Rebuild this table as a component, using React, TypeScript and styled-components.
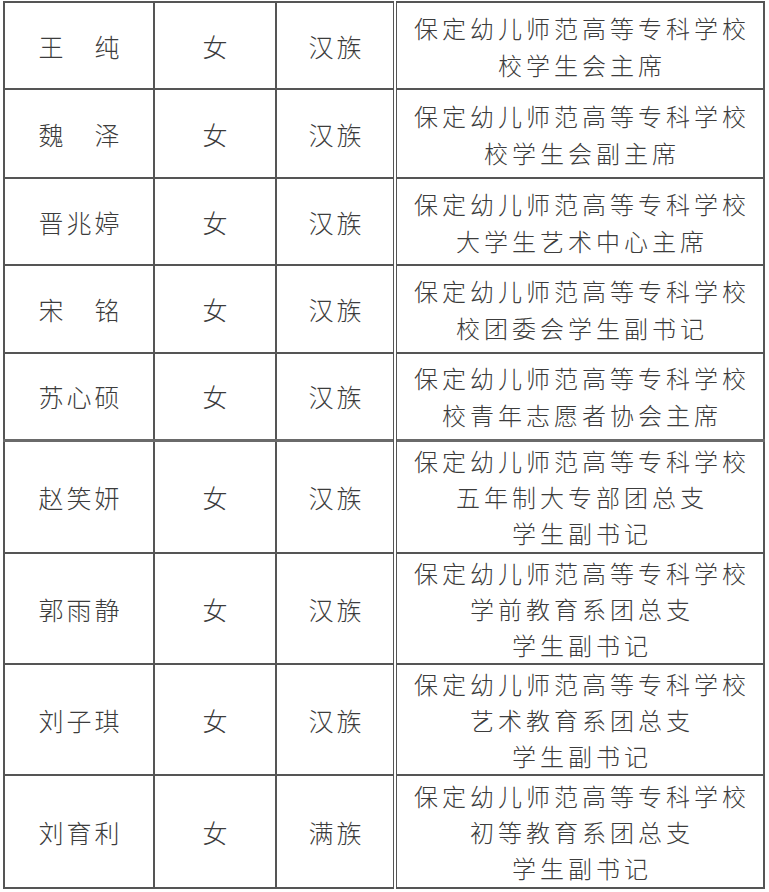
import styled, { createGlobalStyle } from "styled-components";

interface Member {
  name: string;
  gender: string;
  nation: string;
  posts: string[];
  height: number;
}

const members: Member[] = [
  { name: "王纯", gender: "女", nation: "汉族", posts: ["保定幼儿师范高等专科学校", "校学生会主席"], height: 87 },
  { name: "魏泽", gender: "女", nation: "汉族", posts: ["保定幼儿师范高等专科学校", "校学生会副主席"], height: 89 },
  { name: "晋兆婷", gender: "女", nation: "汉族", posts: ["保定幼儿师范高等专科学校", "大学生艺术中心主席"], height: 87 },
  { name: "宋铭", gender: "女", nation: "汉族", posts: ["保定幼儿师范高等专科学校", "校团委会学生副书记"], height: 88 },
  { name: "苏心硕", gender: "女", nation: "汉族", posts: ["保定幼儿师范高等专科学校", "校青年志愿者协会主席"], height: 87 },
  { name: "赵笑妍", gender: "女", nation: "汉族", posts: ["保定幼儿师范高等专科学校", "五年制大专部团总支", "学生副书记"], height: 113 },
  { name: "郭雨静", gender: "女", nation: "汉族", posts: ["保定幼儿师范高等专科学校", "学前教育系团总支", "学生副书记"], height: 111 },
  { name: "刘子琪", gender: "女", nation: "汉族", posts: ["保定幼儿师范高等专科学校", "艺术教育系团总支", "学生副书记"], height: 111 },
  { name: "刘育利", gender: "女", nation: "满族", posts: ["保定幼儿师范高等专科学校", "初等教育系团总支", "学生副书记"], height: 113 },
];

const GlobalStyle = createGlobalStyle`
  html, body {
    margin: 0;
    padding: 0;
    background: #ffffff;
  }
  body {
    font-family: "Noto Sans CJK SC", "Noto Sans", sans-serif;
    color: #3c3c3c;
  }
`;

const Page = styled.div`
  padding: 1px 0 0 3px;
  width: 769px;
  height: 892px;
  box-sizing: border-box;
  overflow: hidden;
`;

const Table = styled.table`
  width: 760px;
  table-layout: fixed;
  border-collapse: collapse;
`;

const Row = styled.tr<{ $h: number; $heavyTop?: boolean }>`
  height: ${(p) => p.$h}px;
  ${(p) => (p.$heavyTop ? "& > td { border-top: 3px solid #6a6a6a; }" : "")}
`;

const Cell = styled.td`
  border: 2px solid #555555;
  padding: 0;
  text-align: center;
  vertical-align: middle;
  font-size: 25px;
  font-weight: 300;
`;

const PostCell = styled(Cell)<{ $lines: number }>`
  border-left: 4px double #555555;
  font-size: 24px;
  line-height: ${(p) => (p.$lines > 2 ? 36 : 37)}px;
  letter-spacing: 4px;
`;

const Name = styled.span<{ $wide: boolean }>`
  letter-spacing: ${(p) => (p.$wide ? "31px" : "3px")};
  margin-right: ${(p) => (p.$wide ? "-31px" : "-3px")};
`;

const Plain = styled.span`
  letter-spacing: 3px;
  margin-right: -3px;
`;

const Line = styled.div`
  margin-right: -4px;
`;

export default function App() {
  return (
    <Page>
      <GlobalStyle />
      <Table>
        <colgroup>
          <col style={{ width: 150 }} />
          <col style={{ width: 122 }} />
          <col style={{ width: 119 }} />
          <col style={{ width: 369 }} />
        </colgroup>
        <tbody>
          {members.map((m, i) => (
            <Row key={m.name} $h={m.height} $heavyTop={i === 5}>
              <Cell>
                <Name $wide={m.name.length === 2}>{m.name}</Name>
              </Cell>
              <Cell>{m.gender}</Cell>
              <Cell>
                <Plain>{m.nation}</Plain>
              </Cell>
              <PostCell $lines={m.posts.length}>
                {m.posts.map((p) => (
                  <Line key={p}>{p}</Line>
                ))}
              </PostCell>
            </Row>
          ))}
        </tbody>
      </Table>
    </Page>
  );
}
